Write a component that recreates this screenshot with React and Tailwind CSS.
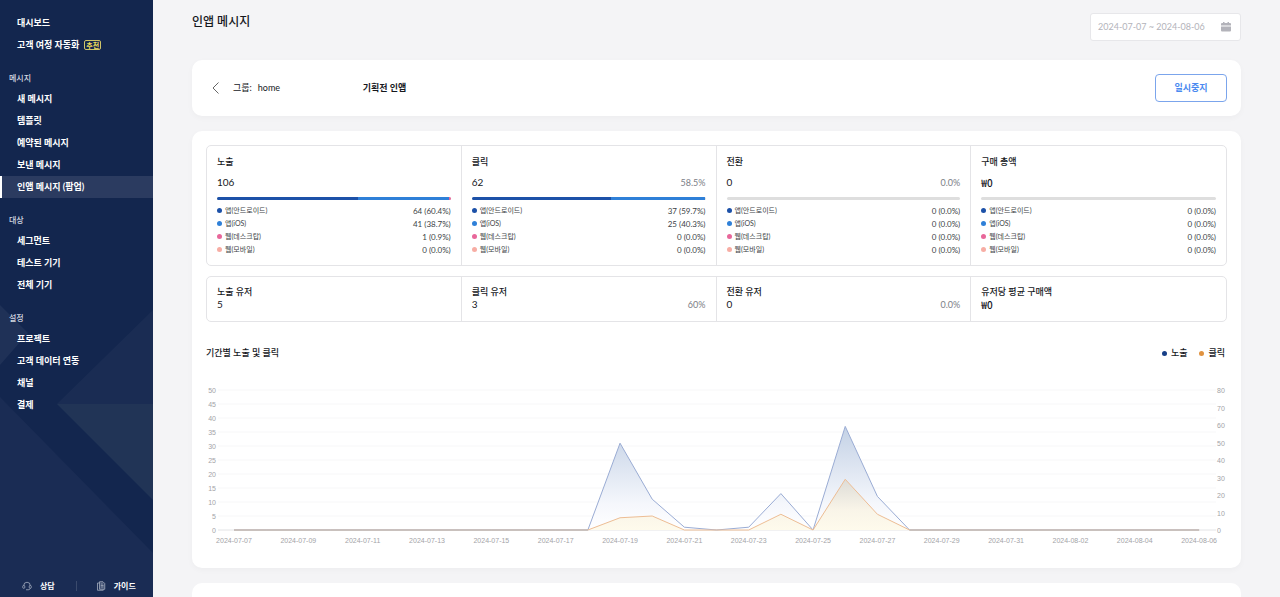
import { useId } from "react";

const NAV = [
  { title: null, items: ["대시보드", "고객 여정 자동화"] },
  { title: "메시지", items: ["새 메시지", "템플릿", "예약된 메시지", "보낸 메시지", "인앱 메시지 (팝업)"] },
  { title: "대상", items: ["세그먼트", "테스트 기기", "전체 기기"] },
  { title: "설정", items: ["프로젝트", "고객 데이터 연동", "채널", "결제"] },
];
const ACTIVE = "인앱 메시지 (팝업)";
const RECOMMENDED = "고객 여정 자동화";

function HeadsetIcon() {
  return (
    <svg viewBox="0 0 20 20" className="size-[10px]" fill="none" stroke="currentColor" strokeWidth="1.6">
      <path d="M3.500 9a6.500 6.500 0 0 1 13 0" />
      <rect x="1.5" y="9" width="4" height="5.5" rx="1.5" />
      <rect x="14.5" y="9" width="4" height="5.5" rx="1.5" />
      <path d="M16.500 14.500c0 2-2 3-4.500 3M8 17.500h4" />
    </svg>
  );
}

function GuideIcon() {
  return (
    <svg viewBox="0 0 20 20" className="size-[10px]" fill="none" stroke="currentColor" strokeWidth="1.6">
      <path d="M7 1.500h7l3.500 3.500v11.500H7z" fill="currentColor" fillOpacity="0.25" />
      <path d="M7 4H3v14.500h11.500v-2M9.500 6h4M9.500 9h5.500M9.500 12h5.500" />
    </svg>
  );
}

function CalendarIcon() {
  return (
    <svg viewBox="0 0 10 10" className="size-[10px]" fill="currentColor">
      <path d="M2 0h1.500v1h3V0H8v1h1a1 1 0 0 1 1 1v1.500H0V2a1 1 0 0 1 1-1h1zM0 4.500h10V8.500a1 1 0 0 1-1 1H1a1 1 0 0 1-1-1z" />
    </svg>
  );
}

function Sidebar() {
  return (
    <aside className="relative flex w-[153px] shrink-0 flex-col justify-between overflow-hidden bg-[#13264e] text-white">
      <svg viewBox="0 0 153 597" className="absolute bottom-0 left-0 w-full" aria-hidden="true">
        <path d="M0 305 28 333 0 365z" fill="#fff" fillOpacity="0.05" />
        <path d="M153 310v94H57z" fill="#fff" fillOpacity="0.03" />
        <path d="M57 404H153V500z" fill="#213456" />
        <path d="M0 397 153 553V597H0z" fill="#1a2c54" />
      </svg>
      <nav className="relative pt-3">
        {NAV.map((group, i) => (
          <section key={i}>
            {group.title && (
              <h2 className="flex h-8 items-end pl-[9px] text-[8px] leading-[20px] font-medium text-[#d3d8e0]">
                {group.title}
              </h2>
            )}
            <ul>
              {group.items.map((item) => (
                <li key={item}>
                  <a
                    href="#"
                    className={
                      item === ACTIVE
                        ? "flex h-[22px] items-center border-l-2 border-white bg-[#2b3b60] pl-[15px] text-[9px] font-bold"
                        : "flex h-[22px] items-center gap-[5px] pl-[17px] text-[9px] font-bold"
                    }
                  >
                    {item}
                    {item === RECOMMENDED && (
                      <span className="flex h-[10px] items-center rounded-[2px] border border-[#cfc469] px-px text-[7px] font-bold text-[#f0dc5a]">
                        추천
                      </span>
                    )}
                  </a>
                </li>
              ))}
            </ul>
          </section>
        ))}
      </nav>
      <footer className="relative flex h-[22px] items-center pl-[22px] text-[8px] font-bold">
        <a href="#" className="flex items-center gap-2">
          <span className="text-[#a4adbf]"><HeadsetIcon /></span>상담
        </a>
        <span className="mr-[19px] ml-[21px] h-[10px] w-px bg-[#3a4a6c]" />
        <a href="#" className="flex items-center gap-2">
          <span className="text-[#a4adbf]"><GuideIcon /></span>가이드
        </a>
      </footer>
    </aside>
  );
}

const PLATFORMS = [
  { name: "앱(안드로이드)", dot: "bg-[#1c51a8]" },
  { name: "앱(iOS)", dot: "bg-[#2f80d8]" },
  { name: "웹(데스크탑)", dot: "bg-[#e8679a]" },
  { name: "웹(모바일)", dot: "bg-[#f7ada4]" },
];
const NONE = ["0 (0.0%)", "0 (0.0%)", "0 (0.0%)", "0 (0.0%)"];

const METRICS = [
  { title: "노출", value: "106", shares: [60.4, 38.7, 0.9, 0], rows: ["64 (60.4%)", "41 (38.7%)", "1 (0.9%)", "0 (0.0%)"] },
  { title: "클릭", value: "62", rate: "58.5%", shares: [59.7, 40.3, 0, 0], rows: ["37 (59.7%)", "25 (40.3%)", "0 (0.0%)", "0 (0.0%)"] },
  { title: "전환", value: "0", rate: "0.0%", shares: [0, 0, 0, 0], rows: NONE },
  { title: "구매 총액", value: "₩0", shares: [0, 0, 0, 0], rows: NONE },
];

const USER_METRICS = [
  { title: "노출 유저", value: "5" },
  { title: "클릭 유저", value: "3", rate: "60%" },
  { title: "전환 유저", value: "0", rate: "0.0%" },
  { title: "유저당 평균 구매액", value: "₩0" },
];

function Figure({ value, rate }) {
  const currency = value.startsWith("₩");
  return (
    <p className="flex items-center justify-between text-[10px] leading-[13px] text-[#16181d]">
      <span className={currency ? "font-['Noto_Sans_CJK_KR',sans-serif] font-medium" : undefined}>{value}</span>
      {rate && <span className="text-[9px] text-[#7b7e86]">{rate}</span>}
    </p>
  );
}

function MetricCell({ metric }) {
  return (
    <section className="px-[10px] pt-[9px] pb-[9px]">
      <h3 className="text-[9px] leading-[13px] font-medium">{metric.title}</h3>
      <div className="mt-2">
        <Figure value={metric.value} rate={metric.rate} />
      </div>
      <div className="mt-2 mb-1 flex h-[3px] overflow-hidden rounded-full bg-[#dedede]">
        {metric.shares.map((share, i) => (
          <span key={i} className={PLATFORMS[i].dot} style={{ width: `${share}%` }} />
        ))}
      </div>
      <ul>
        {PLATFORMS.map((p, i) => (
          <li key={p.name} className="flex h-[13px] items-center text-[7px] text-[#3c3f46]">
            <span className={`mr-[3px] size-[5px] rounded-full ${p.dot}`} />
            <span>{p.name}</span>
            <span className="ml-auto text-[8px]">{metric.rows[i]}</span>
          </li>
        ))}
      </ul>
    </section>
  );
}

const DATES = [
  "2024-07-07", "2024-07-09", "2024-07-11", "2024-07-13", "2024-07-15", "2024-07-17", "2024-07-19", "2024-07-21",
  "2024-07-23", "2024-07-25", "2024-07-27", "2024-07-29", "2024-07-31", "2024-08-02", "2024-08-04", "2024-08-06",
];
const IMPRESSIONS = Array(31).fill(0);
[[12, 31], [13, 11], [14, 1], [16, 1], [17, 13], [19, 37], [20, 12]].forEach(([d, v]) => (IMPRESSIONS[d] = v));
const CLICKS = Array(31).fill(0);
[[12, 7], [13, 8], [17, 9], [19, 29], [20, 9]].forEach(([d, v]) => (CLICKS[d] = v));

const BASE = 150;
const PLOT = 140;
const LEFT = 28;
const STEP = 32.17;
const line = (data, max) =>
  data.map((v, i) => `${LEFT + i * STEP},${BASE - (v / max) * PLOT}`).join(" ");
const area = (data, max) => `${LEFT},${BASE} ${line(data, max)} ${LEFT + 30 * STEP},${BASE}`;

function Chart() {
  const id = useId();
  return (
    <svg viewBox="0 0 1021 168" className="block w-full" role="img" aria-label="기간별 노출 및 클릭">
      <defs>
        <linearGradient id={`${id}a`} gradientUnits="userSpaceOnUse" x1="0" x2="0" y1="46" y2={BASE}>
          <stop offset="0" stopColor="#c3d1e5" />
          <stop offset="0.75" stopColor="#f5f7fc" />
          <stop offset="1" stopColor="#ffffff" />
        </linearGradient>
        <linearGradient id={`${id}b`} gradientUnits="userSpaceOnUse" x1="0" x2="0" y1="99" y2={BASE}>
          <stop offset="0" stopColor="#dcdad4" />
          <stop offset="0.6" stopColor="#f9f4e6" />
          <stop offset="1" stopColor="#fefaea" />
        </linearGradient>
      </defs>
      {Array.from({ length: 10 }, (_, i) => (
        <path key={i} d={`M12 ${10 + i * 14}H1010`} stroke="#f7f7f8" />
      ))}
      <path d={`M12 ${BASE}H1010`} stroke="#e3e4e6" />
      <g fontFamily="Liberation Sans, sans-serif" fontSize="7" fill="#a3a3a7">
        {Array.from({ length: 11 }, (_, i) => (
          <text key={i} x="10" y={BASE + 3 - i * 14} textAnchor="end">{i * 5}</text>
        ))}
        {Array.from({ length: 9 }, (_, i) => (
          <text key={i} x="1011" y={BASE + 3 - i * 17.5}>{i * 10}</text>
        ))}
        {DATES.map((d, i) => (
          <text key={d} x={LEFT + i * STEP * 2} y="163" textAnchor="middle">{d}</text>
        ))}
      </g>
      <polygon points={area(IMPRESSIONS, 50)} fill={`url(#${id}a)`} />
      <polyline points={line(IMPRESSIONS, 50)} fill="none" stroke="#9aacd4" />
      <polygon points={area(CLICKS, 80)} fill={`url(#${id}b)`} fillOpacity="0.9" />
      <polyline points={line(CLICKS, 80)} fill="none" stroke="#edbd94" />
      <path d={`M${LEFT} ${BASE}H${LEFT + 11 * STEP}M${LEFT + 21 * STEP} ${BASE}H${LEFT + 30 * STEP}`} stroke="#b9bbc0" />
    </svg>
  );
}

export default function App() {
  return (
    <div className="flex h-screen overflow-hidden bg-[#f4f4f6] font-['Lato','Noto_Sans_CJK_KR',sans-serif] text-[#16181d]" lang="ko">
      <Sidebar />
      <main className="flex min-w-0 flex-1 flex-col overflow-hidden px-[39px]">
        <header className="flex h-[60px] shrink-0 items-start justify-between">
          <h1 className="mt-[13px] text-[12px] leading-[18px] font-medium">인앱 메시지</h1>
          <label className="mt-[13px] flex h-7 w-[151px] items-center rounded-[3px] border border-[#e7e7ea] bg-white pr-[9px] pl-[7px] text-[#b3b3ba]">
            <input
              aria-label="조회 기간"
              defaultValue="2024-07-07 ~ 2024-08-06"
              className="min-w-0 flex-1 bg-transparent text-[9px] outline-none"
            />
            <CalendarIcon />
          </label>
        </header>

        <section className="flex h-14 shrink-0 items-center rounded-[10px] bg-white pr-[14px] pl-5 text-[9px] shadow-[0_2px_6px_rgba(0,0,0,0.03)]">
          <button type="button" aria-label="뒤로" className="mr-[14px]">
            <svg viewBox="0 0 7 12" className="h-3 w-[7px]" fill="none" stroke="#666" strokeWidth="1">
              <path d="M6.500.5 1 6l5.500 5.500" />
            </svg>
          </button>
          <span className="mr-[6px]">그룹:</span>
          <span className="w-[105px]">home</span>
          <strong className="font-bold">기획전 인앱</strong>
          <button type="button" className="ml-auto h-7 w-[72px] rounded-[4px] border border-[#7ba5ec] font-bold text-[#4a8af0]">
            일시중지
          </button>
        </section>

        <section className="mt-[15px] shrink-0 rounded-[10px] bg-white px-[14px] pt-[14px] pb-5 shadow-[0_2px_6px_rgba(0,0,0,0.03)]">
          <div className="grid grid-cols-4 divide-x divide-[#e4e4e7] rounded-[5px] border border-[#e4e4e7]">
            {METRICS.map((m) => (
              <MetricCell key={m.title} metric={m} />
            ))}
          </div>
          <div className="mt-[10px] grid grid-cols-4 divide-x divide-[#e4e4e7] rounded-[5px] border border-[#e4e4e7]">
            {USER_METRICS.map((m) => (
              <section key={m.title} className="px-[10px] pt-2 pb-[10px]">
                <h3 className="text-[9px] leading-[13px] font-medium">{m.title}</h3>
                <Figure value={m.value} rate={m.rate} />
              </section>
            ))}
          </div>
          <div className="mt-6 mb-5 flex items-center justify-between text-[9px] leading-[14px] font-medium">
            <h2>기간별 노출 및 클릭</h2>
            <ul className="flex gap-3 pr-[2px]">
              <li className="flex items-center gap-1"><span className="size-[5px] rounded-full bg-[#173f87]" />노출</li>
              <li className="flex items-center gap-1"><span className="size-[5px] rounded-full bg-[#e0923f]" />클릭</li>
            </ul>
          </div>
          <Chart />
        </section>

        <section className="mt-[15px] h-24 shrink-0 rounded-[10px] bg-white" />
      </main>
    </div>
  );
}
